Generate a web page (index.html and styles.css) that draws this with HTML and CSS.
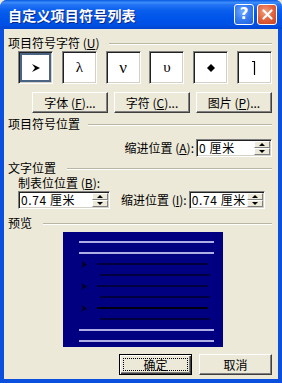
FILE: index.html
```html
<!DOCTYPE html>
<html lang="zh-CN">
<head>
<meta charset="utf-8">
<title>自定义项目符号列表</title>
<link rel="stylesheet" href="styles.css">
</head>
<body>
<div class="window">
  <div class="titlebar">
    <span class="title">自定义项目符号列表</span>
    <div class="tb-buttons">
      <span class="tb-btn help">?</span>
      <span class="tb-btn close"><svg width="11" height="11" viewBox="0 0 11 11"><path d="M1.5 1.5 L9.5 9.5 M9.5 1.5 L1.5 9.5" stroke="#fff" stroke-width="2.2" stroke-linecap="round"/></svg></span>
    </div>
  </div>
  <div class="client">
    <div class="group-head g1"><span>项目符号字符 (<u>U</u>)</span><i class="rule"></i></div>
    <div class="symbols">
      <div class="sym"><div class="cell selected"><svg width="10" height="10" viewBox="0 0 10 10"><path d="M1 1 L9 5 L1 9 L4 5 Z" fill="#000"/></svg></div></div>
      <div class="sym"><div class="cell"><span class="gl">λ</span></div></div>
      <div class="sym"><div class="cell"><span class="gl big">ν</span></div></div>
      <div class="sym"><div class="cell"><span class="gl">υ</span></div></div>
      <div class="sym"><div class="cell"><svg width="8" height="8" viewBox="0 0 8 8"><path d="M4 0 L8 4 L4 8 L0 4 Z" fill="#000"/></svg></div></div>
      <div class="sym"><div class="cell"><svg width="8" height="16" viewBox="0 0 8 16"><path d="M2 1.5 H4.5 V15" stroke="#000" stroke-width="1.2" fill="none"/></svg></div></div>
    </div>
    <div class="btn-row">
      <button class="btn">字体 (<u>F</u>)...</button>
      <button class="btn">字符 (<u>C</u>)...</button>
      <button class="btn">图片 (<u>P</u>)...</button>
    </div>
    <div class="group-head g2"><span>项目符号位置</span><i class="rule"></i></div>
    <div class="field-row indent-row">
      <label class="flabel">缩进位置 (<u>A</u>):</label>
      <div class="spin w76"><span class="val">0 厘米</span><span class="arrows"><i class="up"></i><i class="down"></i></span></div>
    </div>
    <div class="group-head g3"><span>文字位置</span><i class="rule"></i></div>
    <div class="sublabel">制表位位置 (<u>B</u>):</div>
    <div class="field-row two">
      <div class="spin w92"><span class="val">0.74 厘米</span><span class="arrows"><i class="up"></i><i class="down"></i></span></div>
      <label class="flabel">缩进位置 (<u>I</u>):</label>
      <div class="spin w76"><span class="val">0.74 厘米</span><span class="arrows"><i class="up"></i><i class="down"></i></span></div>
    </div>
    <div class="group-head g4"><span>预览</span><i class="rule"></i></div>
    <div class="preview">
      <i class="pl light"></i>
      <i class="pl light"></i>
      <div class="brow"><svg class="bul" width="6" height="7" viewBox="0 0 6 7"><path d="M0 0 L6 3.5 L0 7 L2 3.5 Z" fill="#00001c"/></svg><i class="pl dark"></i></div>
      <i class="pl dark cont"></i>
      <div class="brow"><svg class="bul" width="6" height="7" viewBox="0 0 6 7"><path d="M0 0 L6 3.5 L0 7 L2 3.5 Z" fill="#00001c"/></svg><i class="pl dark"></i></div>
      <i class="pl dark cont"></i>
      <div class="brow"><svg class="bul" width="6" height="7" viewBox="0 0 6 7"><path d="M0 0 L6 3.5 L0 7 L2 3.5 Z" fill="#00001c"/></svg><i class="pl dark black"></i></div>
      <i class="pl dark cont"></i>
      <i class="pl light"></i>
      <i class="pl light"></i>
    </div>
    <div class="dlg-buttons">
      <button class="btn default"><span class="focus">确定</span></button>
      <button class="btn">取消</button>
    </div>
  </div>
</div>
</body>
</html>
```
FILE: styles.css
```css
* { box-sizing: border-box; }
html, body { margin: 0; padding: 0; background: #ECE9D8; }
body {
  font-family: "Noto Sans CJK SC", "Liberation Sans", sans-serif;
  font-size: 12px;
  line-height: 12px;
  color: #000;
}
u { text-decoration: underline; text-underline-offset: 1px; }

.window {
  width: 282px;
  height: 383px;
  display: flex;
  flex-direction: column;
  background: #0a4fdd;
  border-radius: 7px 7px 0 0;
  overflow: hidden;
}

.titlebar {
  height: 29px;
  flex: none;
  display: flex;
  align-items: center;
  justify-content: space-between;
  padding: 0 5px 0 8px;
  background: linear-gradient(180deg, #0a5ae6 0%, #3c8df9 9%, #2475f3 16%, #0a5fee 35%, #0055ea 60%, #0050e4 85%, #0045d2 100%);
}
.title {
  color: #fff;
  font-weight: bold;
  font-size: 14px;
  line-height: 14px;
  letter-spacing: 0.2px;
  text-shadow: 1px 1px 0 #0b2a8c;
  margin-top: 1px;
}
.tb-buttons { display: flex; gap: 3px; }
.tb-btn {
  width: 20px;
  height: 21px;
  border: 1px solid #fff;
  border-radius: 3px;
  display: flex;
  align-items: center;
  justify-content: center;
  color: #fff;
  font-family: "DejaVu Sans", sans-serif;
  font-weight: bold;
  font-size: 15px;
  line-height: 15px;
}
.tb-btn.help {
  background: radial-gradient(circle at 40% 35%, #6fa8ff 0%, #3a7ff2 45%, #1c5ede 100%);
}
.tb-btn.close {
  background: radial-gradient(circle at 40% 35%, #f0a080 0%, #e2623c 50%, #c8401e 100%);
}

.client {
  flex: 1;
  margin: 0 4px 4px;
  background: #ECE9D8;
  padding: 8px 6px 0 4px;
  display: flex;
  flex-direction: column;
}

.group-head {
  display: flex;
  align-items: center;
  height: 12px;
}
.group-head span { white-space: nowrap; }
.group-head .rule {
  flex: 1;
  height: 2px;
  border-top: 1px solid #b9b6a4;
  border-bottom: 1px solid #fff;
  margin-left: 10px;
  margin-top: 1px;
}
.g2 .rule { margin-left: 8px; }
.g3 .rule { margin-left: 11px; }
.g4 .rule { margin-left: 11px; }

.symbols {
  margin-top: 2px;
  margin-left: 10px;
  height: 33px;
  display: flex;
  justify-content: space-between;
}
.sym {
  width: 35px;
  height: 33px;
  background: #fff;
  border: 1px solid;
  border-color: #808080 #ffffff #ffffff #808080;
  box-shadow: inset 1px 1px 0 #202020, inset -1px -1px 0 #d4d0c8;
  padding: 1px;
  display: flex;
}
.cell {
  flex: 1;
  display: flex;
  align-items: center;
  justify-content: center;
}
.cell.selected {
  border: 2px solid #4a6584;
}
.gl {
  font-family: "Liberation Serif", "DejaVu Serif", serif;
  font-size: 15px;
  line-height: 15px;
}
.gl.big { font-size: 17px; line-height: 17px; }

.btn {
  font: inherit;
  color: #000;
  background: #ECE9D8;
  border: 1px solid;
  border-color: #ffffff #404040 #404040 #ffffff;
  box-shadow: inset -1px -1px 0 #808080;
  padding: 0;
  margin: 0;
  display: flex;
  align-items: center;
  justify-content: center;
  white-space: nowrap;
}

.btn-row {
  margin-top: 8px;
  height: 21px;
  display: flex;
  justify-content: flex-end;
  gap: 6px;
}
.btn-row .btn { width: 76px; height: 21px; }

.g2 { margin-top: 5px; }

.field-row {
  display: flex;
  align-items: center;
}
.indent-row {
  margin-top: 9px;
  justify-content: flex-end;
}
.flabel { white-space: nowrap; margin-right: 2px; }

.spin {
  height: 18px;
  background: #fff;
  border: 1px solid;
  border-color: #808080 #ffffff #ffffff #808080;
  box-shadow: inset 1px 1px 0 #202020, inset -1px -1px 0 #d4d0c8;
  display: flex;
  align-items: stretch;
  padding: 1px;
}
.w76 { width: 76px; }
.w92 { width: 92px; }
.val {
  flex: 1;
  display: flex;
  align-items: center;
  padding-left: 1px;
  white-space: nowrap;
  letter-spacing: 0.6px;
}
.arrows {
  width: 16px;
  display: flex;
  flex-direction: column;
  background: #ECE9D8;
}
.arrows i {
  flex: 1;
  display: flex;
  align-items: center;
  justify-content: center;
  border: 1px solid;
  border-color: #ffffff #808080 #808080 #ffffff;
}
.arrows i::before {
  content: "";
  width: 0;
  height: 0;
  border-left: 3px solid transparent;
  border-right: 3px solid transparent;
}
.arrows .up::before { border-bottom: 3px solid #000; }
.arrows .down::before { border-top: 3px solid #000; }

.g3 { margin-top: 5px; }
.sublabel {
  margin-top: 3px;
  margin-left: 10px;
  height: 12px;
  white-space: nowrap;
}
.two {
  margin-top: 2px;
  margin-left: 10px;
}
.two .flabel { margin-left: 11px; }

.g4 { margin-top: 8px; }

.preview {
  margin-top: 3px;
  margin-left: 55px;
  width: 160px;
  height: 115px;
  background: #000080;
  padding-top: 9px;
  display: flex;
  flex-direction: column;
  gap: 9px;
}
.pl { display: block; height: 2px; flex: none; }
.pl.light {
  margin-left: 16px;
  width: 135px;
  background: #aeaee4;
}
.pl.dark {
  width: 111px;
  background: #00003e;
}
.pl.dark.black { background: #000012; }
.pl.dark.cont {
  margin-left: 37px;
  width: 110px;
}
.brow {
  height: 2px;
  flex: none;
  display: flex;
  align-items: center;
  margin-left: 18px;
}
.bul { flex: none; margin-right: 10px; }

.dlg-buttons {
  margin-top: 7px;
  display: flex;
  justify-content: flex-end;
  gap: 7px;
}
.dlg-buttons .btn { width: 73px; height: 21px; }
.btn.default {
  border: 1px solid #000;
  box-shadow: inset 1px 1px 0 #fff, inset -1px -1px 0 #404040, inset -2px -2px 0 #808080;
  padding: 3px;
  align-items: stretch;
}
.btn.default .focus {
  flex: 1;
  border: 1px dotted #000;
  display: flex;
  align-items: center;
  justify-content: center;
}
```
